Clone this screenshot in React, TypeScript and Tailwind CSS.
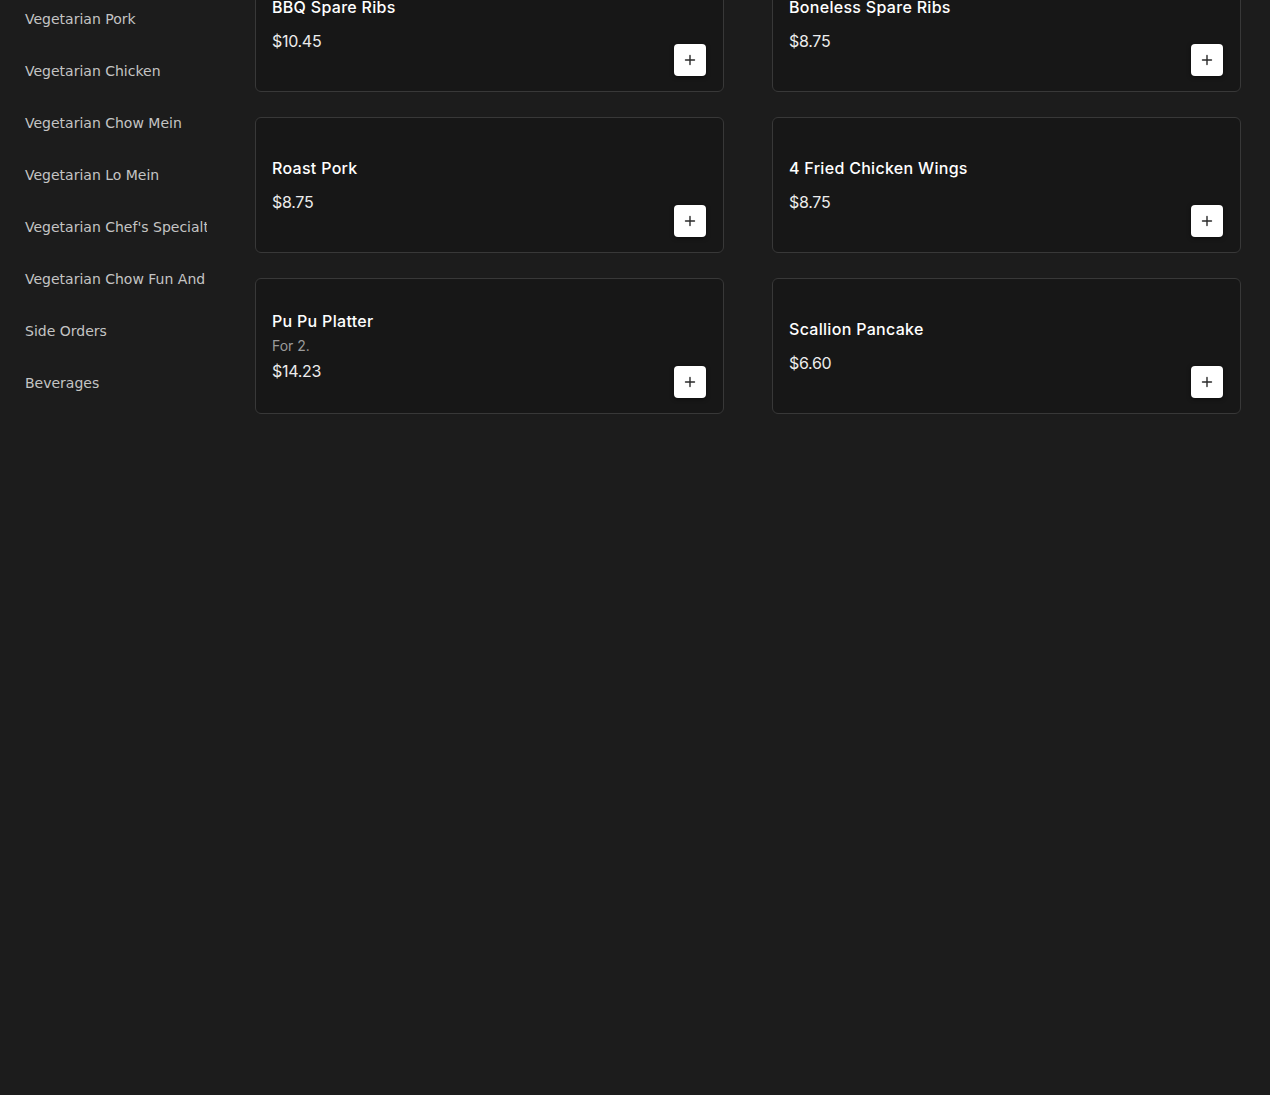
import React from 'react';

type Item = { name: string; price: string; desc?: string };

const categories = [
  'Vegetarian Pork',
  'Vegetarian Chicken',
  'Vegetarian Chow Mein',
  'Vegetarian Lo Mein',
  "Vegetarian Chef's Specialties",
  'Vegetarian Chow Fun And Mei Fun',
  'Side Orders',
  'Beverages',
];

const items: Item[] = [
  { name: 'BBQ Spare Ribs', price: '$10.45' },
  { name: 'Boneless Spare Ribs', price: '$8.75' },
  { name: 'Roast Pork', price: '$8.75' },
  { name: '4 Fried Chicken Wings', price: '$8.75' },
  { name: 'Pu Pu Platter', desc: 'For 2.', price: '$14.23' },
  { name: 'Scallion Pancake', price: '$6.60' },
];

const PlusIcon = () => (
  <svg width="12" height="12" viewBox="0 0 12 12" fill="none">
    <path d="M6 1.5v9M1.5 6h9" stroke="#2a2a2a" strokeWidth="1.4" strokeLinecap="round" />
  </svg>
);

const MenuCard = ({ item }: { item: Item }) => (
  <div className="h-[136px] rounded-md border border-[#383838] bg-[#171717] pl-4 pr-[17px] flex items-center justify-between">
    <div className="flex flex-col">
      <h3 className="text-[16px] leading-6 font-medium text-white tracking-[0.3px]">{item.name}</h3>
      {item.desc && <p className="mt-[3px] text-[14px] leading-5 text-[#9b9b9b]">{item.desc}</p>}
      <p className={`${item.desc ? 'mt-[3px]' : 'mt-[10px]'} text-[16px] leading-6 text-[#ececec] tracking-[-0.3px]`}>
        {item.price}
      </p>
    </div>
    <button className="self-end mb-[15px] w-8 h-8 rounded-[4px] bg-white flex items-center justify-center shadow-[0_1px_4px_rgba(0,0,0,0.5)]">
      <PlusIcon />
    </button>
  </div>
);

export default function App() {
  return (
    <div className="h-[1095px] overflow-hidden bg-[#1c1c1c] flex">
      {/* category list */}
      <nav className="w-[207px] shrink-0 pl-[25px] overflow-hidden -mt-[7px] font-['DejaVu_Sans',sans-serif]">
        {categories.map((c) => (
          <div key={c} className="py-4 text-[14px] leading-5 text-[#c4c4c4] whitespace-nowrap">
            {c}
          </div>
        ))}
      </nav>

      {/* items */}
      <main className="flex-1 pl-[48px] pr-[29px] font-['Inter',sans-serif]">
        <div className="-mt-[44px] grid grid-cols-2 gap-x-[48px] gap-y-[25px]">
          {items.map((it) => (
            <MenuCard key={it.name} item={it} />
          ))}
        </div>
      </main>
    </div>
  );
}
